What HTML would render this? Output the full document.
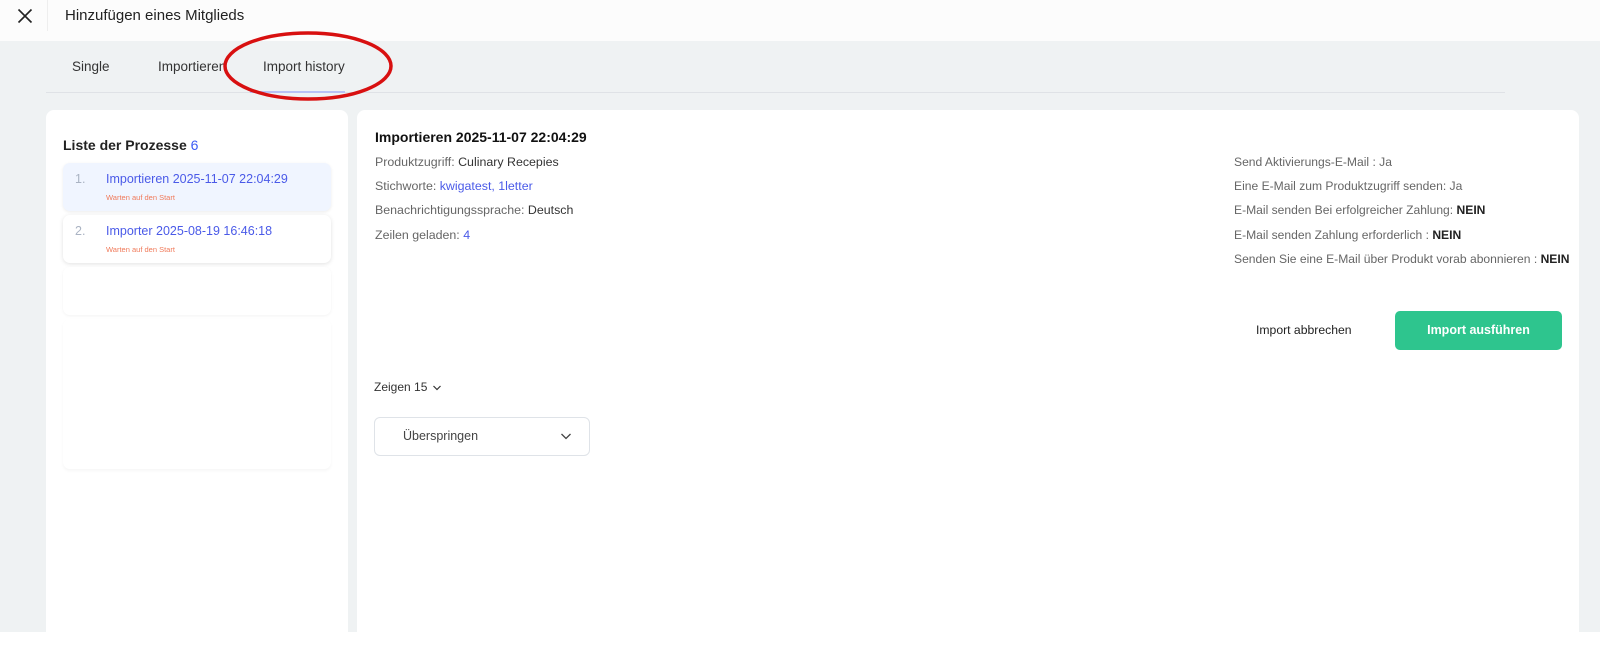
<!DOCTYPE html>
<html><head><meta charset="utf-8"><style>
*{margin:0;padding:0;box-sizing:border-box}
body{width:1600px;height:650px;background:#fff;font-family:"Liberation Sans",sans-serif;position:relative;overflow:hidden;color:#333}
.a{position:absolute;white-space:nowrap}
</style></head><body>
<div class="a" style="left:0;top:0;width:1600px;height:41px;background:#fcfcfc"></div>
<svg class="a" style="left:17px;top:8px" width="16" height="16" viewBox="0 0 16 16"><path d="M1.5 1.5L14.5 14.5M14.5 1.5L1.5 14.5" stroke="#222" stroke-width="1.6"/></svg>
<div class="a" style="left:47px;top:0;width:1px;height:31px;background:#eee"></div>
<div class="a" style="left:65px;top:7px;font-size:15px;color:#222;line-height:18px">Hinzufügen eines Mitglieds</div>
<div class="a" style="left:0;top:41px;width:1600px;height:591px;background:#eff2f3"></div>
<div class="a" style="left:72px;top:59px;font-size:13.5px;color:#333">Single</div>
<div class="a" style="left:158px;top:59px;font-size:13.5px;color:#333">Importieren</div>
<div class="a" style="left:263px;top:59px;font-size:13.5px;color:#333">Import history</div>
<div class="a" style="left:46px;top:92px;width:1459px;height:1px;background:#dfe2e6"></div>
<div class="a" style="left:250px;top:91px;width:95px;height:2px;background:#b8c2f5"></div>
<svg class="a" style="left:220px;top:28px" width="180" height="80"><ellipse cx="88" cy="38" rx="83" ry="33" fill="none" stroke="#d81010" stroke-width="3.5"/></svg>

<div class="a" style="left:46px;top:110px;width:302px;height:522px;background:#fff;border-radius:8px 8px 0 0"></div>
<div class="a" style="left:63px;top:137px;font-size:14px;font-weight:bold;color:#222">Liste der Prozesse <span style="color:#3b5bf5;font-weight:normal">6</span></div>
<div class="a" style="left:63px;top:163px;width:268px;height:48px;background:#f0f5ff;border-radius:7px;box-shadow:0 1px 3px rgba(0,0,0,.08)"></div>
<div class="a" style="left:75px;top:172px;font-size:12.5px;color:#aab3c3">1.</div>
<div class="a" style="left:106px;top:172px;font-size:12.5px;color:#4a5ae8">Importieren 2025-11-07 22:04:29</div>
<div class="a" style="left:106px;top:193px;font-size:7.5px;color:#f07a5a">Warten auf den Start</div>
<div class="a" style="left:63px;top:215px;width:268px;height:48px;background:#fff;border-radius:7px;box-shadow:0 1px 4px rgba(0,0,0,.12)"></div>
<div class="a" style="left:75px;top:224px;font-size:12.5px;color:#aab3c3">2.</div>
<div class="a" style="left:106px;top:224px;font-size:12.5px;color:#4a5ae8">Importer 2025-08-19 16:46:18</div>
<div class="a" style="left:106px;top:245px;font-size:7.5px;color:#f07a5a">Warten auf den Start</div>
<div class="a" style="left:63px;top:267px;width:268px;height:48px;background:#fff;border-radius:7px;box-shadow:0 1px 3px rgba(0,0,0,.05)"></div>
<div class="a" style="left:63px;top:319px;width:268px;height:150px;background:#fff;border-radius:7px;box-shadow:0 2px 3px rgba(0,0,0,.04)"></div>

<div class="a" style="left:357px;top:110px;width:1222px;height:522px;background:#fff;border-radius:8px 8px 0 0"></div>
<div class="a" style="left:375px;top:129px;font-size:14px;font-weight:bold;color:#111">Importieren 2025-11-07 22:04:29</div>
<div class="a" style="left:375px;top:155px;font-size:12.4px;color:#666">Produktzugriff: <span style="color:#333">Culinary Recepies</span></div>
<div class="a" style="left:375px;top:179px;font-size:12.4px;color:#666">Stichworte: <span style="color:#4a5ae8">kwigatest, 1letter</span></div>
<div class="a" style="left:375px;top:203px;font-size:12.4px;color:#666">Benachrichtigungssprache: <span style="color:#333">Deutsch</span></div>
<div class="a" style="left:375px;top:228px;font-size:12.4px;color:#666">Zeilen geladen: <span style="color:#4a5ae8">4</span></div>

<div class="a" style="left:1234px;top:155px;font-size:12.1px;color:#666">Send Aktivierungs-E-Mail : Ja</div>
<div class="a" style="left:1234px;top:179px;font-size:12.1px;color:#666">Eine E-Mail zum Produktzugriff senden: Ja</div>
<div class="a" style="left:1234px;top:203px;font-size:12.1px;color:#666">E-Mail senden Bei erfolgreicher Zahlung: <b style="color:#222">NEIN</b></div>
<div class="a" style="left:1234px;top:228px;font-size:12.1px;color:#666">E-Mail senden Zahlung erforderlich : <b style="color:#222">NEIN</b></div>
<div class="a" style="left:1234px;top:252px;font-size:12.1px;color:#666">Senden Sie eine E-Mail über Produkt vorab abonnieren : <b style="color:#222">NEIN</b></div>

<div class="a" style="left:1256px;top:323px;font-size:12.2px;color:#222">Import abbrechen</div>
<div class="a" style="left:1395px;top:311px;width:167px;height:39px;background:#2ec58e;border-radius:5px;color:#fff;font-size:12.5px;font-weight:bold;text-align:center;line-height:39px">Import ausführen</div>

<div class="a" style="left:374px;top:380px;font-size:12px;color:#333">Zeigen 15</div>
<svg class="a" style="left:432px;top:384px" width="10" height="8"><path d="M1.5 2L5 5.5L8.5 2" fill="none" stroke="#333" stroke-width="1.2"/></svg>
<div class="a" style="left:374px;top:417px;width:216px;height:39px;border:1px solid #dfe3e8;border-radius:6px"></div>
<div class="a" style="left:403px;top:429px;font-size:12.5px;color:#444">Überspringen</div>
<svg class="a" style="left:560px;top:432px" width="12" height="9"><path d="M1.5 2L6 6.5L10.5 2" fill="none" stroke="#444" stroke-width="1.3"/></svg>
</body></html>
